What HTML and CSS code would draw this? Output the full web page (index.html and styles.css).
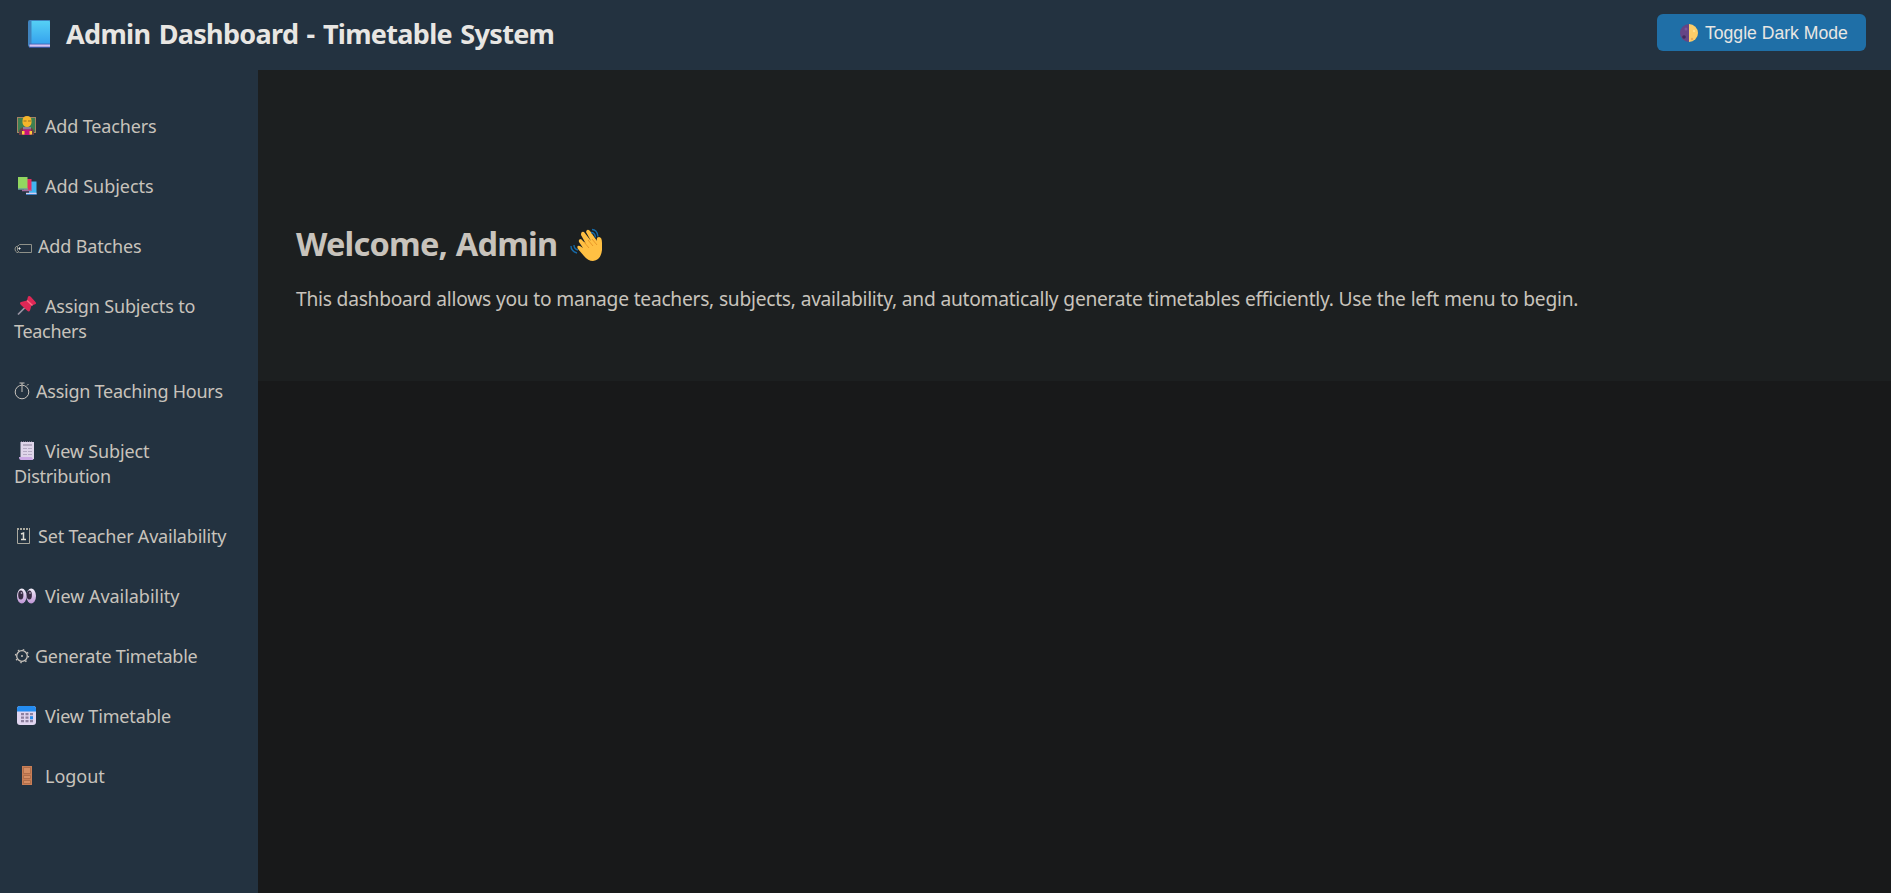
FILE: index.html
```html
<!DOCTYPE html>
<html lang="en">
<head>
<meta charset="utf-8">
<title>Admin Dashboard</title>
<link rel="stylesheet" href="styles.css">
</head>
<body>
<header class="topbar">
  <h1 class="brand">
    <svg class="brand-icon" width="22" height="28" viewBox="0 0 22 28"><defs><linearGradient id="bk" x1="0" y1="0" x2="0" y2="1"><stop offset="0" stop-color="#55d0f5"/><stop offset="1" stop-color="#36a3ee"/></linearGradient></defs><path d="M2 0h20v27H2q-2 0-2-2V2Q0 0 2 0z" fill="#3f83bd"/><rect x="1.500" y="24" width="20.500" height="3" fill="#d5c3ef"/><path d="M1 24h21M1 27.200h21" stroke="#4361bd" stroke-width="1"/><path d="M3.500 1H21q1 0 1 1v21.500H3.500z" fill="url(#bk)"/></svg>
    <span>Admin Dashboard - Timetable System</span>
  </h1>
  <button class="toggle" type="button">
    <svg width="18" height="18" viewBox="0 0 18 18"><path d="M9 0a9 9 0 0 0 0 18z" fill="#654585"/><path d="M9 0a9 9 0 0 1 0 18z" fill="#fbcd68"/><circle cx="4" cy="13" r="1.800" fill="#402a5c"/><circle cx="6" cy="5" r="1.500" fill="#7a559a"/><circle cx="12" cy="15" r="1.200" fill="#e9a95c"/><circle cx="14" cy="7" r="1.200" fill="#ffe08b"/></svg>
    <span>Toggle Dark Mode</span>
  </button>
</header>
<div class="shell">
  <nav class="sidebar">
    <a class="item"><svg class="ico" width="20" height="20" viewBox="0 0 20 20"><rect x=".5" y="1.500" width="18" height="15" fill="#3d7f52" stroke="#a58263"/><path d="M2 19v-3q0-4 5-5h5q5 1 5 5v3z" fill="#6b4047"/><path d="M5.500 5q0-5 4.500-5t4.500 5v2q-1 4-4.500 4T5.500 7z" fill="#f5b52b"/><path d="M6.500 5h3M11 5h3" stroke="#9b7024"/><path d="M6 11h8v2.500H6z" fill="#8a7a9b"/><rect x="6" y="13.500" width="8" height="5.500" fill="#c4157e"/><path d="M5 15h2.500v3.500H5zM12.500 15H15v3.500h-2.500z" fill="#ffc93b"/></svg><span>Add Teachers</span></a>
    <a class="item wide"><svg class="ico" width="20" height="20" viewBox="0 0 20 20"><rect x="12" y="5.500" width="7.500" height="13" fill="#40b4f0"/><path d="M9 17.500h10.500" stroke="#d9cdf2" stroke-width="1.500"/><path d="M9 18.500h10.500" stroke="#3b7fc0"/><rect x="7" y="3" width="7.500" height="12" fill="#e32e62"/><path d="M5 14.500h9" stroke="#a56b9d" stroke-width="1.500"/><rect x="1" y="1" width="9.500" height="12" fill="#92d660"/><path d="M1 13h10" stroke="#6b9e9b" stroke-width="1.500"/></svg><span>Add Subjects</span></a>
    <a class="item glyph batches"><svg class="ico" width="19" height="20" viewBox="0 0 19 20" fill="none" stroke="#8f9189"><path d="M5.500 8.500h12v8h-12l-2-2v-4z"/><path d="M4.500 16.500H3q-2-1-2-3.500t2.500-3"/><circle cx="5.500" cy="12.500" r=".7" fill="#e8e6e3" stroke="#e8e6e3"/></svg><span>Add Batches</span></a>
    <a class="item"><svg class="ico" width="20" height="20" viewBox="0 0 20 20"><path d="M1 18.500l7-7" stroke="#9995a3" stroke-width="1.700"/><path d="M11 .5q1.500-1 3 .5l4.500 5q1.500 2-1 2.500l-3 1-1.500 5q-1 2-3 0L4 9Q2 7 4 6l6-1.500z" fill="#df2856"/><path d="M10 4.500l5.500 5" stroke="#ff6a85" stroke-width="1.500"/></svg><span>Assign Subjects to<br><span class="second">Teachers</span></span></a>
    <a class="item glyph hours"><svg class="ico" width="17" height="20" viewBox="0 0 17 20" fill="none" stroke="#c8c3bc"><circle cx="8" cy="11" r="6.800"/><path d="M8 5v6M5.500 2h5M8 2v2M13 4.500l1.500-1.500"/></svg><span>Assign Teaching Hours</span></a>
    <a class="item"><svg class="ico" width="20" height="20" viewBox="0 0 20 20"><path d="M3.500 1H17v17H3.500z" fill="#dfd5ea"/><path d="M4 .5h12" stroke="#746d84" stroke-dasharray="1 1"/><path d="M6 4h9" stroke="#8b8199"/><path d="M6 7.500h9M6 10.500h9M6 13.500h9" stroke="#b5aac4" stroke-dasharray="4 1"/><path d="M2 16h12.500l2 3H4q-2 0-2-3z" fill="#cba9e5"/></svg><span>View Subject<br><span class="second">Distribution</span></span></a>
    <a class="item glyph avail"><svg class="ico" width="19" height="20" viewBox="0 0 19 20" fill="none" stroke="#aaa99f"><path d="M3.500 2v15.500h12V2"/><path d="M3 3h13" stroke-width="2" stroke-dasharray="2 1"/><path d="M7 8l2.500-1v6.500M7 13.500h5" stroke="#e0ddd5" stroke-width="1.500"/></svg><span>Set Teacher Availability</span></a>
    <a class="item wide"><svg class="ico" width="20" height="20" viewBox="0 0 20 20"><defs><linearGradient id="ey" x1="0" y1="0" x2="0" y2="1"><stop offset="0" stop-color="#f4effa"/><stop offset="1" stop-color="#be94d5"/></linearGradient></defs><ellipse cx="4.800" cy="10" rx="4.800" ry="7.500" fill="url(#ey)"/><ellipse cx="14.200" cy="10" rx="4.800" ry="7.500" fill="url(#ey)"/><ellipse cx="3.800" cy="9" rx="2.600" ry="4.500" fill="#382b43"/><ellipse cx="12.300" cy="9" rx="2.600" ry="4.500" fill="#382b43"/><circle cx="4.500" cy="7" r=".9" fill="#a99bb5"/><circle cx="13" cy="7" r=".9" fill="#a99bb5"/></svg><span>View Availability</span></a>
    <a class="item glyph generate"><svg class="ico" width="16" height="20" viewBox="0 0 16 20" fill="none" stroke="#c8c3bc"><circle cx="8" cy="10" r="5.300" stroke-width="1.300"/><circle cx="8" cy="10" r="6.500" stroke-width="1.300" stroke-dasharray="1.500 3.605"/><circle cx="8" cy="10" r=".6" fill="#c8c3bc"/></svg><span>Generate Timetable</span></a>
    <a class="item"><svg class="ico" width="20" height="20" viewBox="0 0 20 20"><rect x="0" y="0" width="19" height="19" rx="3" fill="#e0d5ef"/><path d="M0 5.500V3Q0 0 3 0h13q3 0 3 3v2.500z" fill="#248cf0"/><path d="M4 8.200h12M4 11.700h12M4 15.200h12" stroke="#8e819f" stroke-width="2.200" stroke-dasharray="3 1.500"/><rect x="13" y="10.300" width="3" height="3" fill="#248cf0"/></svg><span>View Timetable</span></a>
    <a class="item wide"><svg class="ico" width="20" height="20" viewBox="0 0 20 20"><rect x="5" y="0" width="10" height="19" fill="#c97e56"/><path d="M6.500 1.500h7v6h-7zM6.500 9.500h7v3h-7zM6.500 14.500h7v3h-7z" fill="#d58d63" stroke="#aa6845" stroke-width=".8"/></svg><span>Logout</span></a>
  </nav>
  <main class="main">
    <section class="welcome">
      <h2 class="hello"><span>Welcome, Admin</span>
        <svg class="wave" width="32" height="34" viewBox="0 0 32 34"><path d="M9 14q-1-3 2-3l5 5-5-9q0-4 3-3l7 9-5-9q1-4 4-1l7 10q-1-4 2-4 3 0 3 6v7q-1 10-9 11-5 0-9-5l-6-7q-2-4 2-3l3 2z" fill="#ffc043"/><path d="M14 14l5 6M18 12l5 6M22 11l5 6" stroke="#e99728" fill="none"/><path d="M1 18q0 5 6 7M4 17q0 4 4 5M22 1.500q5 0 6 7M21 4.500q4 0 4.500 5" stroke="#1769a5" stroke-width="1.400" fill="none"/></svg></h2>
      <p class="lead">This dashboard allows you to manage teachers, subjects, availability, and automatically generate timetables efficiently. Use the left menu to begin.</p>
    </section>
  </main>
</div>
</body>
</html>
```
FILE: styles.css
```css
* { box-sizing: border-box; }
body { margin: 0; height: 893px; background: #18191a; color: #c8c3bc; font-family: "Noto Sans", sans-serif; overflow: hidden; }
.topbar { height: 70px; background: #233240; display: flex; justify-content: space-between; align-items: flex-start; padding: 14px 25px 0 28px; }
.brand { margin: 0; display: flex; align-items: flex-start; gap: 16px; font-size: 27px; line-height: 40px; letter-spacing: -0.68px; word-spacing: 2px; color: #e8e6e3; }
.brand-icon { margin-top: 6px; }
.toggle { width: 209px; height: 37px; border: 0; border-radius: 6px; background: #1f6fa7; color: #e8e6e3; font-family: "Liberation Sans", sans-serif; font-size: 17.6px; padding: 1px 0 0 23px; display: flex; align-items: center; gap: 7px; }
.shell { display: flex; height: 823px; }
.sidebar { width: 258px; flex: none; background: #233240; padding: 44px 14px 0; display: flex; flex-direction: column; gap: 35px; }
.item { display: flex; font-size: 18px; line-height: 25px; letter-spacing: -0.15px; gap: 8px; white-space: nowrap; }
.wide { letter-spacing: -0.03px; }
.ico { flex: none; margin: 2px 0 0 3px; }
.glyph { gap: 5px; }
.glyph .ico { margin-left: 0; }
.hours { letter-spacing: -0.24px; }
.avail { letter-spacing: -0.2px; }
.generate { letter-spacing: -0.26px; }
.second { margin-left: -31px; letter-spacing: -0.3px; }
.main { flex: 1; }
.welcome { height: 311px; background: #1c1f20; padding: 152px 38px 0; }
.hello { margin: 0; font-size: 32.5px; line-height: 44px; letter-spacing: -0.78px; word-spacing: 1px; display: flex; gap: 13px; }
.wave { margin-top: 6px; }
.lead { margin: 19px 0 0; font-size: 19.2px; line-height: 28px; letter-spacing: -0.27px; word-spacing: 0.3px; white-space: nowrap; }
```
